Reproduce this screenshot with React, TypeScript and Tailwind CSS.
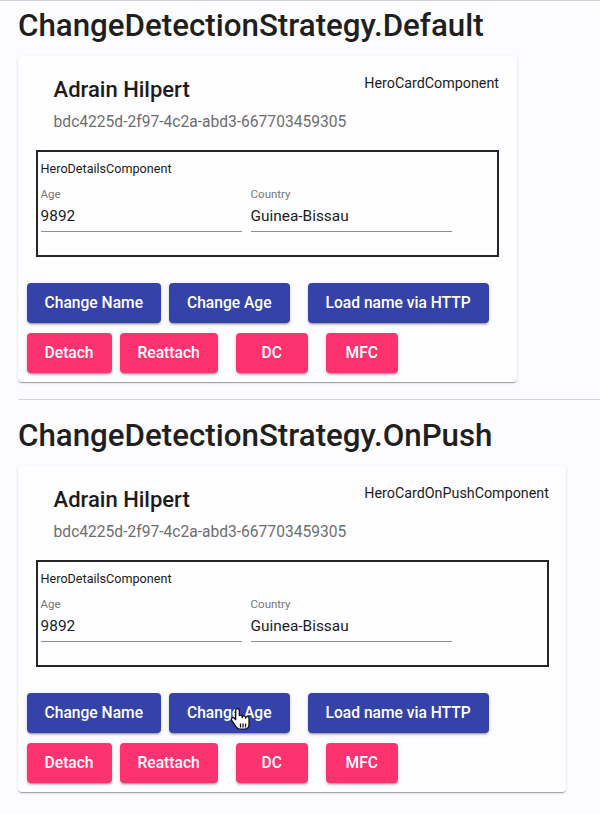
import React from "react"

type BtnProps = { label: string; color: "blue" | "pink"; className?: string; children?: React.ReactNode }

function Btn({ label, color, className = "", children }: BtnProps) {
  const bg = color === "blue" ? "bg-[#3543a9]" : "bg-[#fd3370]"
  return (
    <button
      className={`relative h-[40px] min-w-[72px] rounded-[4px] px-[18px] text-[15.6px] font-medium leading-[40px] text-white shadow-[0_3px_1px_-2px_rgba(0,0,0,0.2),0_2px_2px_0_rgba(0,0,0,0.14),0_1px_5px_0_rgba(0,0,0,0.12)] ${bg} ${className}`}
    >
      {label}
      {children}
    </button>
  )
}

function HandCursor() {
  return (
    <svg
      className="absolute left-[62px] top-[14px]"
      width="21"
      height="25"
      viewBox="0 0 21 25"
    >
      <path
        d="M6.5 1.5c-1 0-1.8.8-1.8 1.8v9.4l-1.3-1.4c-.7-.8-1.9-.8-2.6-.1-.6.6-.6 1.6-.1 2.3l4.2 6.1c.9 1.3 2.3 2.6 4 2.6h4.6c2.6 0 4.5-2.1 4.5-4.7v-6.2c0-1-.8-1.7-1.7-1.7s-1.7.8-1.7 1.7v-.8c0-1-.8-1.7-1.7-1.7s-1.7.8-1.7 1.7v-.7c0-1-.8-1.7-1.7-1.7-.5 0-.9.2-1.2.4V3.3c0-1-.8-1.8-1.8-1.8z"
        fill="#fff"
        stroke="#111"
        strokeWidth="1.3"
        strokeLinejoin="round"
      />
      <path d="M9.5 16.5v4M12 16.5v4M14.5 16.5v4" stroke="#111" strokeWidth="1.3" />
    </svg>
  )
}

function HeroCard({ componentName, withCursor }: { componentName: string; withCursor?: boolean }) {
  return (
    <div className="ml-[18px] w-fit rounded-[4px] bg-[#fefdff] px-[17.6px] pt-[17px] pb-[9px] shadow-[0_2px_1px_-1px_rgba(0,0,0,0.2),0_1px_1px_0_rgba(0,0,0,0.14),0_1px_3px_0_rgba(0,0,0,0.12)]">
      <div className="flex items-start">
        <div className="px-[18px]">
          <div className="mt-[3px] text-[22px] font-medium leading-[28px] text-[#1c1c1c]">Adrain Hilpert</div>
          <div className="mt-[8px] text-[15.6px] leading-[20px] text-[#6e6e6e]">
            bdc4225d-2f97-4c2a-abd3-667703459305
          </div>
        </div>
        <div className="mt-[1px] text-[14.3px] leading-[18px] text-[#1c1c1c]">{componentName}</div>
      </div>

      <div className="mt-[18px] border-2 border-[#262626] px-[3px] pt-[8.5px] pb-[23px]">
        <div className="text-[12.6px] leading-[16px] text-[#1c1c1c]">HeroDetailsComponent</div>
        <div className="mt-[10px] flex gap-[9px]">
          <div className="w-[201px]">
            <div className="text-[11.5px] leading-[14px] text-[#777]">Age</div>
            <div className="mt-[5px] text-[15.4px] leading-[20px] text-[#1c1c1c]">9892</div>
            <div className="mt-[5.5px] h-[1px] bg-[#8e8e8e]" />
          </div>
          <div className="w-[201px]">
            <div className="text-[11.5px] leading-[14px] text-[#777]">Country</div>
            <div className="mt-[5px] text-[15.4px] leading-[20px] text-[#1c1c1c]">Guinea-Bissau</div>
            <div className="mt-[5.5px] h-[1px] bg-[#8e8e8e]" />
          </div>
        </div>
      </div>

      <div className="-ml-[9px] mt-[26px] flex flex-col gap-[10px]">
        <div className="flex">
          <Btn label="Change Name" color="blue" />
          <Btn label="Change Age" color="blue" className="ml-[8px]">
            {withCursor && <HandCursor />}
          </Btn>
          <Btn label="Load name via HTTP" color="blue" className="ml-[18px]" />
        </div>
        <div className="flex">
          <Btn label="Detach" color="pink" />
          <Btn label="Reattach" color="pink" className="ml-[8px]" />
          <Btn label="DC" color="pink" className="ml-[18px]" />
          <Btn label="MFC" color="pink" className="ml-[18px]" />
        </div>
      </div>
    </div>
  )
}

export default function App() {
  return (
    <div className="min-h-[814px] border-t border-[#cfcfcf] bg-[#fcfbfe] font-['Roboto',sans-serif]">
      <h1 className="ml-[18px] mt-[5px] text-[31.3px] font-medium leading-[40px] text-[#1f1f1f]">
        ChangeDetectionStrategy.Default
      </h1>
      <div className="mt-[10px]">
        <HeroCard componentName="HeroCardComponent" />
      </div>

      <div className="ml-[18px] mt-[17px] h-[1px] bg-[#d6d6d6]" />

      <h1 className="ml-[18px] mt-[16px] text-[31.3px] font-medium leading-[40px] text-[#1f1f1f]">
        ChangeDetectionStrategy.OnPush
      </h1>
      <div className="mt-[10px]">
        <HeroCard componentName="HeroCardOnPushComponent" withCursor />
      </div>
    </div>
  )
}
